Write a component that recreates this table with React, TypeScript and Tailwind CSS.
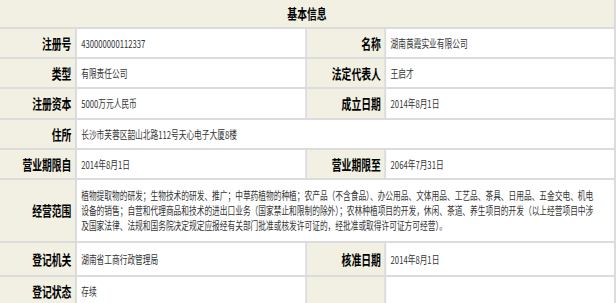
import React from "react";

const label =
  "bg-[#f1f0e2] border-r-[3px] border-[#dcdcdc] flex items-center justify-end pr-[5px] text-[14px] font-bold text-black";
const value =
  "bg-white border-r-[3px] border-[#dcdcdc] flex items-center pl-[6px] text-[11px] text-[#333]";
const row = "grid grid-cols-[110px_329px_113px_1fr] border-b-2 border-[#dcdcdc]";

const Pair = ({ h, a, b, c, d }: { h: string; a: string; b: string; c: string; d: string }) => (
  <div className={`${row} ${h}`}>
    <div className={label}>{a}</div>
    <div className={value}>{b}</div>
    <div className={label}>{c}</div>
    <div className={value}>{d}</div>
  </div>
);

const App = () => {
  return (
    <div className="w-[616px] h-[303px] overflow-hidden bg-white font-['Noto_Sans_CJK_SC',sans-serif]">
      <div className="w-[880px] origin-top-left scale-x-[0.7]">
        <div className="h-[29px] bg-[#f1f0e2] border-b-2 border-r-[3px] border-[#dcdcdc] flex items-center justify-center text-[14px] font-bold text-black">
          基本信息
        </div>
        <Pair h="h-[30px]" a="注册号" b="430000000112337" c="名称" d="湖南莨霞实业有限公司" />
        <Pair h="h-[30px]" a="类型" b="有限责任公司" c="法定代表人" d="王启才" />
        <Pair h="h-[31px]" a="注册资本" b="5000万元人民币" c="成立日期" d="2014年8月1日" />
        <div className={`grid grid-cols-[110px_1fr] border-b-2 border-[#dcdcdc] h-[30px]`}>
          <div className={label}>住所</div>
          <div className={value}>长沙市芙蓉区韶山北路112号天心电子大厦8楼</div>
        </div>
        <Pair h="h-[30px]" a="营业期限自" b="2014年8月1日" c="营业期限至" d="2064年7月31日" />
        <div className={`grid grid-cols-[110px_1fr] border-b-2 border-[#dcdcdc] h-[63px]`}>
          <div className={label}>经营范围</div>
          <div className={`${value} leading-[15px] whitespace-nowrap`}>
            <p>
              植物提取物的研发；生物技术的研发、推广；中草药植物的种植；农产品（不含食品）、办公用品、文体用品、工艺品、茶具、日用品、五金交电、机电
              <br />
              设备的销售；自营和代理商品和技术的进出口业务（国家禁止和限制的除外）；农林种植项目的开发，休闲、茶道、养生项目的开发（以上经营项目中涉
              <br />
              及国家法律、法规和国务院决定规定应报经有关部门批准或核发许可证的，经批准或取得许可证方可经营）。
            </p>
          </div>
        </div>
        <Pair h="h-[34px]" a="登记机关" b="湖南省工商行政管理局" c="核准日期" d="2014年8月1日" />
        <Pair h="h-[31px]" a="登记状态" b="存续" c="" d="" />
      </div>
    </div>
  );
};

export default App;
